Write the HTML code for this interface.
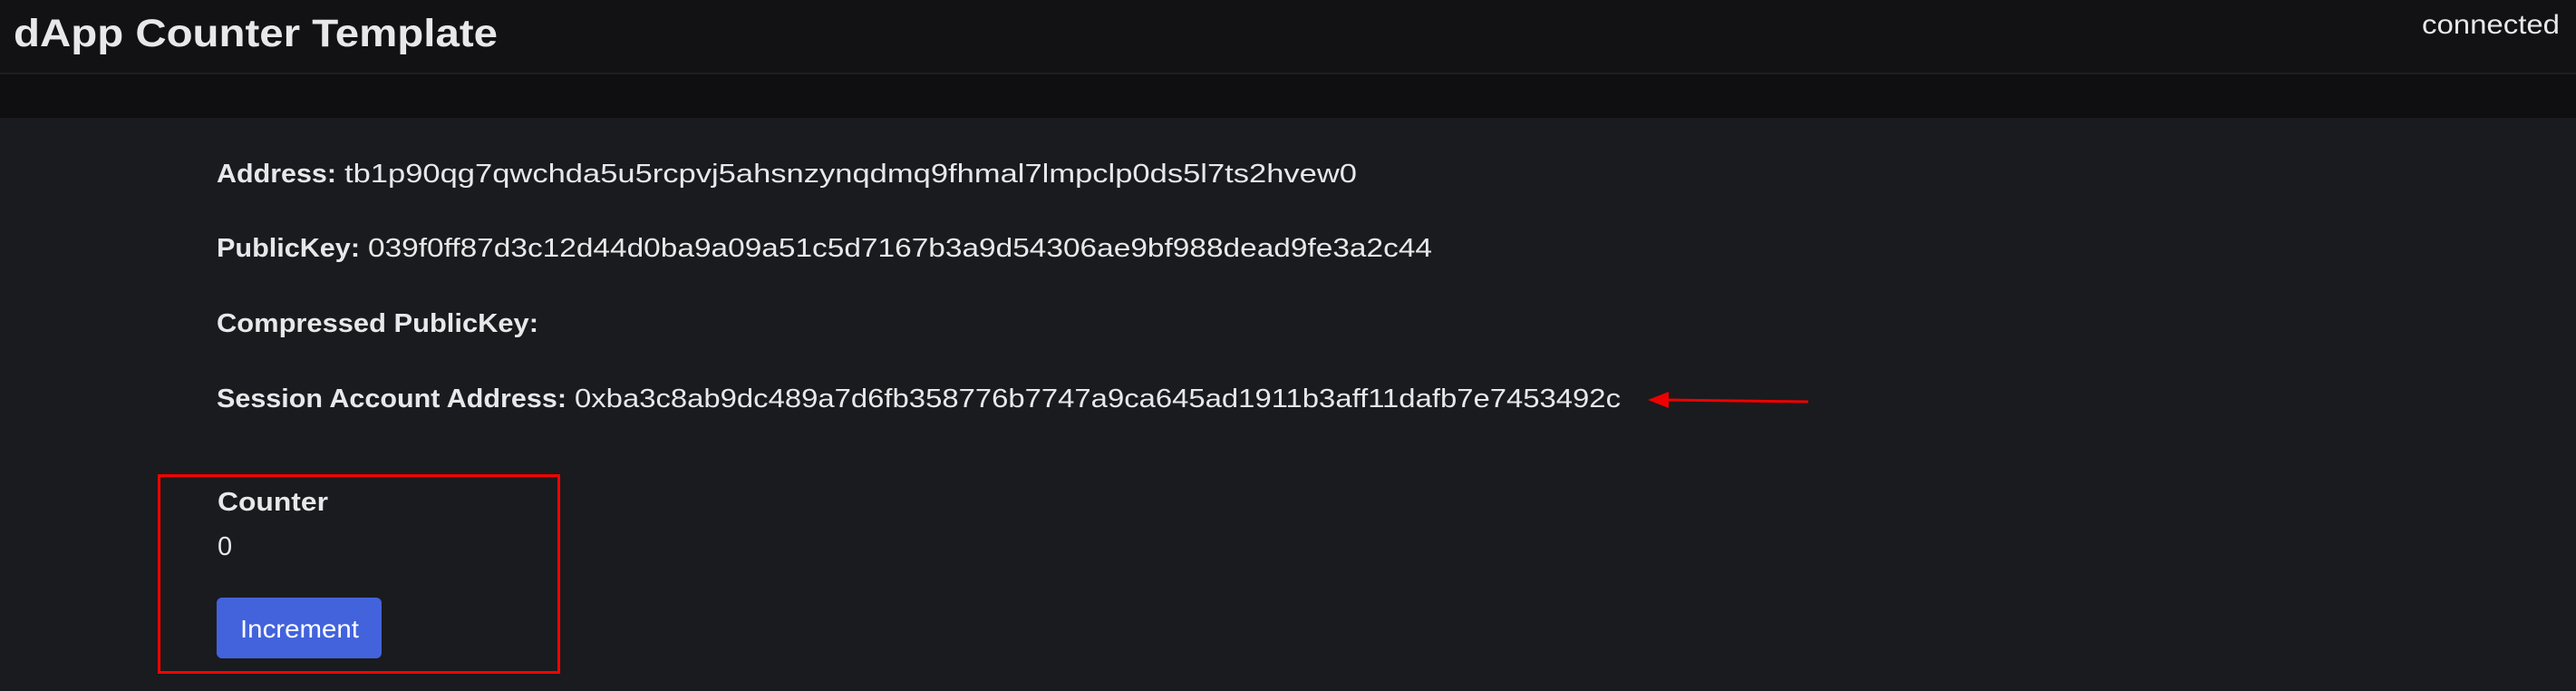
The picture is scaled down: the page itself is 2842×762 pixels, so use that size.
<!DOCTYPE html>
<html><head><meta charset="utf-8"><style>
html,body{margin:0;padding:0;width:2842px;height:762px;overflow:hidden;background:#1a1b1e}
svg{display:block}
text{font-family:"Liberation Sans","DejaVu Sans",sans-serif;fill:#e8e8ea}
.b{font-weight:bold}
</style></head><body>
<svg width="2842" height="762" viewBox="0 0 2842 762">
<rect x="0" y="0" width="2842" height="80" fill="#121214"/>
<rect x="0" y="80" width="2842" height="2" fill="#1e1e21"/>
<rect x="0" y="82" width="2842" height="48" fill="#0f0f11"/>
<text class="b" x="15" y="51" font-size="43" textLength="534" lengthAdjust="spacingAndGlyphs">dApp Counter Template</text>
<text x="2672" y="37" font-size="30" textLength="152" lengthAdjust="spacingAndGlyphs">connected</text>

<text class="b" x="239" y="201" font-size="29" textLength="132" lengthAdjust="spacingAndGlyphs">Address:</text>
<text x="380" y="201" font-size="29" textLength="1117" lengthAdjust="spacingAndGlyphs">tb1p90qg7qwchda5u5rcpvj5ahsnzynqdmq9fhmal7lmpclp0ds5l7ts2hvew0</text>

<text class="b" x="239" y="283" font-size="29" textLength="158" lengthAdjust="spacingAndGlyphs">PublicKey:</text>
<text x="406" y="283" font-size="29" textLength="1174" lengthAdjust="spacingAndGlyphs">039f0ff87d3c12d44d0ba9a09a51c5d7167b3a9d54306ae9bf988dead9fe3a2c44</text>

<text class="b" x="239" y="366" font-size="29" textLength="355" lengthAdjust="spacingAndGlyphs">Compressed PublicKey:</text>

<text class="b" x="239" y="449" font-size="29" textLength="386" lengthAdjust="spacingAndGlyphs">Session Account Address:</text>
<text x="634" y="449" font-size="29" textLength="1154" lengthAdjust="spacingAndGlyphs">0xba3c8ab9dc489a7d6fb358776b7747a9ca645ad1911b3aff11dafb7e7453492c</text>

<line x1="1995" y1="443" x2="1838" y2="441" stroke="#ee0000" stroke-width="3"/>
<polygon points="1818,441 1841,432 1841,450" fill="#ee0000"/>

<rect x="175.5" y="524.5" width="441" height="217" fill="none" stroke="#ff0000" stroke-width="3"/>
<text class="b" x="240" y="563" font-size="29" textLength="122" lengthAdjust="spacingAndGlyphs">Counter</text>
<text x="240" y="612" font-size="29">0</text>
<rect x="239" y="659" width="182" height="67" rx="6" fill="#4263dc"/>
<text x="265" y="703" font-size="28" textLength="131" lengthAdjust="spacingAndGlyphs" style="fill:#fff">Increment</text>
</svg>
</body></html>
